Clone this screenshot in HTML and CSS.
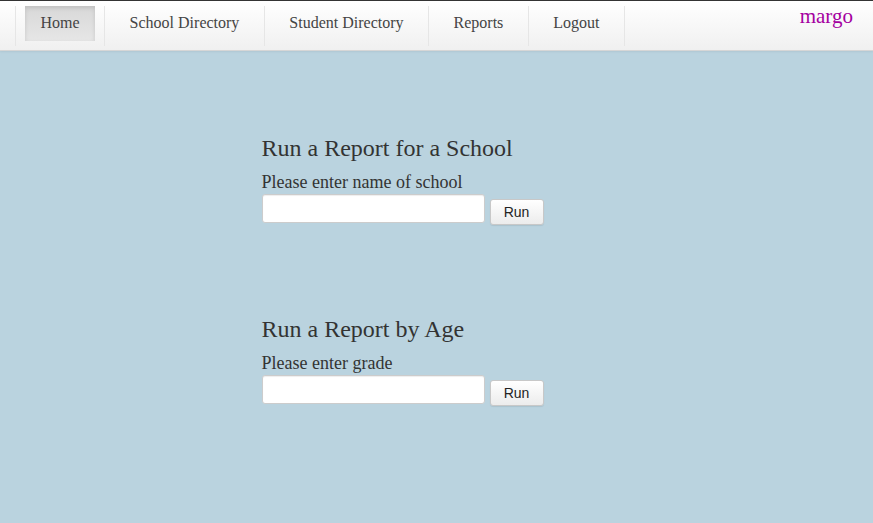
FILE: index.html
```html
<!DOCTYPE html>
<html>
<head>
<meta charset="utf-8">
<link rel="stylesheet" href="styles.css">
</head>
<body>
<header class="navbar">
  <ul class="nav">
    <li class="nav-item active"><a href="#">Home</a></li>
    <li class="nav-item"><a href="#">School Directory</a></li>
    <li class="nav-item"><a href="#">Student Directory</a></li>
    <li class="nav-item"><a href="#">Reports</a></li>
    <li class="nav-item"><a href="#">Logout</a></li>
  </ul>
  <div class="user">margo</div>
</header>
<main class="content">
  <section class="report">
    <h2>Run a Report for a School</h2>
    <label class="field-label">Please enter name of school</label>
    <div class="row">
      <input type="text" class="text-input">
      <button class="btn">Run</button>
    </div>
  </section>
  <section class="report">
    <h2>Run a Report by Age</h2>
    <label class="field-label">Please enter grade</label>
    <div class="row">
      <input type="text" class="text-input">
      <button class="btn">Run</button>
    </div>
  </section>
</main>
</body>
</html>
```

FILE: styles.css
```css
html, body {
  margin: 0;
  padding: 0;
}
body {
  background: #bad3df;
  font-family: "Liberation Serif", "Times New Roman", serif;
  color: #333;
  min-height: 523px;
}
.navbar {
  display: flex;
  justify-content: space-between;
  height: 49px;
  border-top: 1px solid #333;
  border-bottom: 1px solid #d6d6d6;
  background: linear-gradient(#ffffff, #f0f0f0);
  box-shadow: 0 1px 2px rgba(0,0,0,0.06);
}
.nav {
  list-style: none;
  margin: 0;
  padding: 5px 0 0 15px;
  display: flex;
  height: 40px;
}
.nav-item {
  border-left: 1px solid #e6e6e6;
  padding: 0 9px;
  height: 40px;
}
.nav-item:last-child {
  border-right: 1px solid #e6e6e6;
}
.nav-item a {
  display: block;
  padding: 0 15.5px;
  height: 35px;
  line-height: 34px;
  font-size: 16px;
  color: #444;
  text-decoration: none;
}
.nav-item.active a {
  background: linear-gradient(#d8d8d8, #e6e6e6);
  box-shadow: inset 0 2px 4px rgba(0,0,0,0.12);
}
.user {
  color: #a400a0;
  font-size: 21px;
  padding: 5px 20px 0 0;
  line-height: 21px;
}
.content {
  width: 350px;
  margin: 0 auto;
  padding-top: 82px;
}
.report {
  height: 181px;
}
.report h2 {
  font-weight: normal;
  font-size: 24px;
  margin: 0;
  line-height: 30px;
  color: #333;
}
.field-label {
  display: block;
  font-size: 18px;
  line-height: 20px;
  margin-top: 9px;
}
.row {
  display: flex;
  align-items: flex-start;
  gap: 5px;
  margin-top: 2px;
}
.text-input {
  box-sizing: border-box;
  width: 223px;
  height: 29px;
  margin: 0;
  border: 1px solid #ccc;
  border-radius: 3px;
  background: #fff;
  box-shadow: inset 0 1px 1px rgba(0,0,0,0.07);
}
.btn {
  box-sizing: border-box;
  margin-top: 5px;
  width: 54px;
  height: 26px;
  font-family: "Liberation Sans", Arial, sans-serif;
  font-size: 14px;
  color: #222;
  border: 1px solid #c8c8c8;
  border-radius: 3px;
  background: linear-gradient(#ffffff, #ececec);
  box-shadow: 0 1px 1px rgba(0,0,0,0.08);
  padding: 0;
}
```
